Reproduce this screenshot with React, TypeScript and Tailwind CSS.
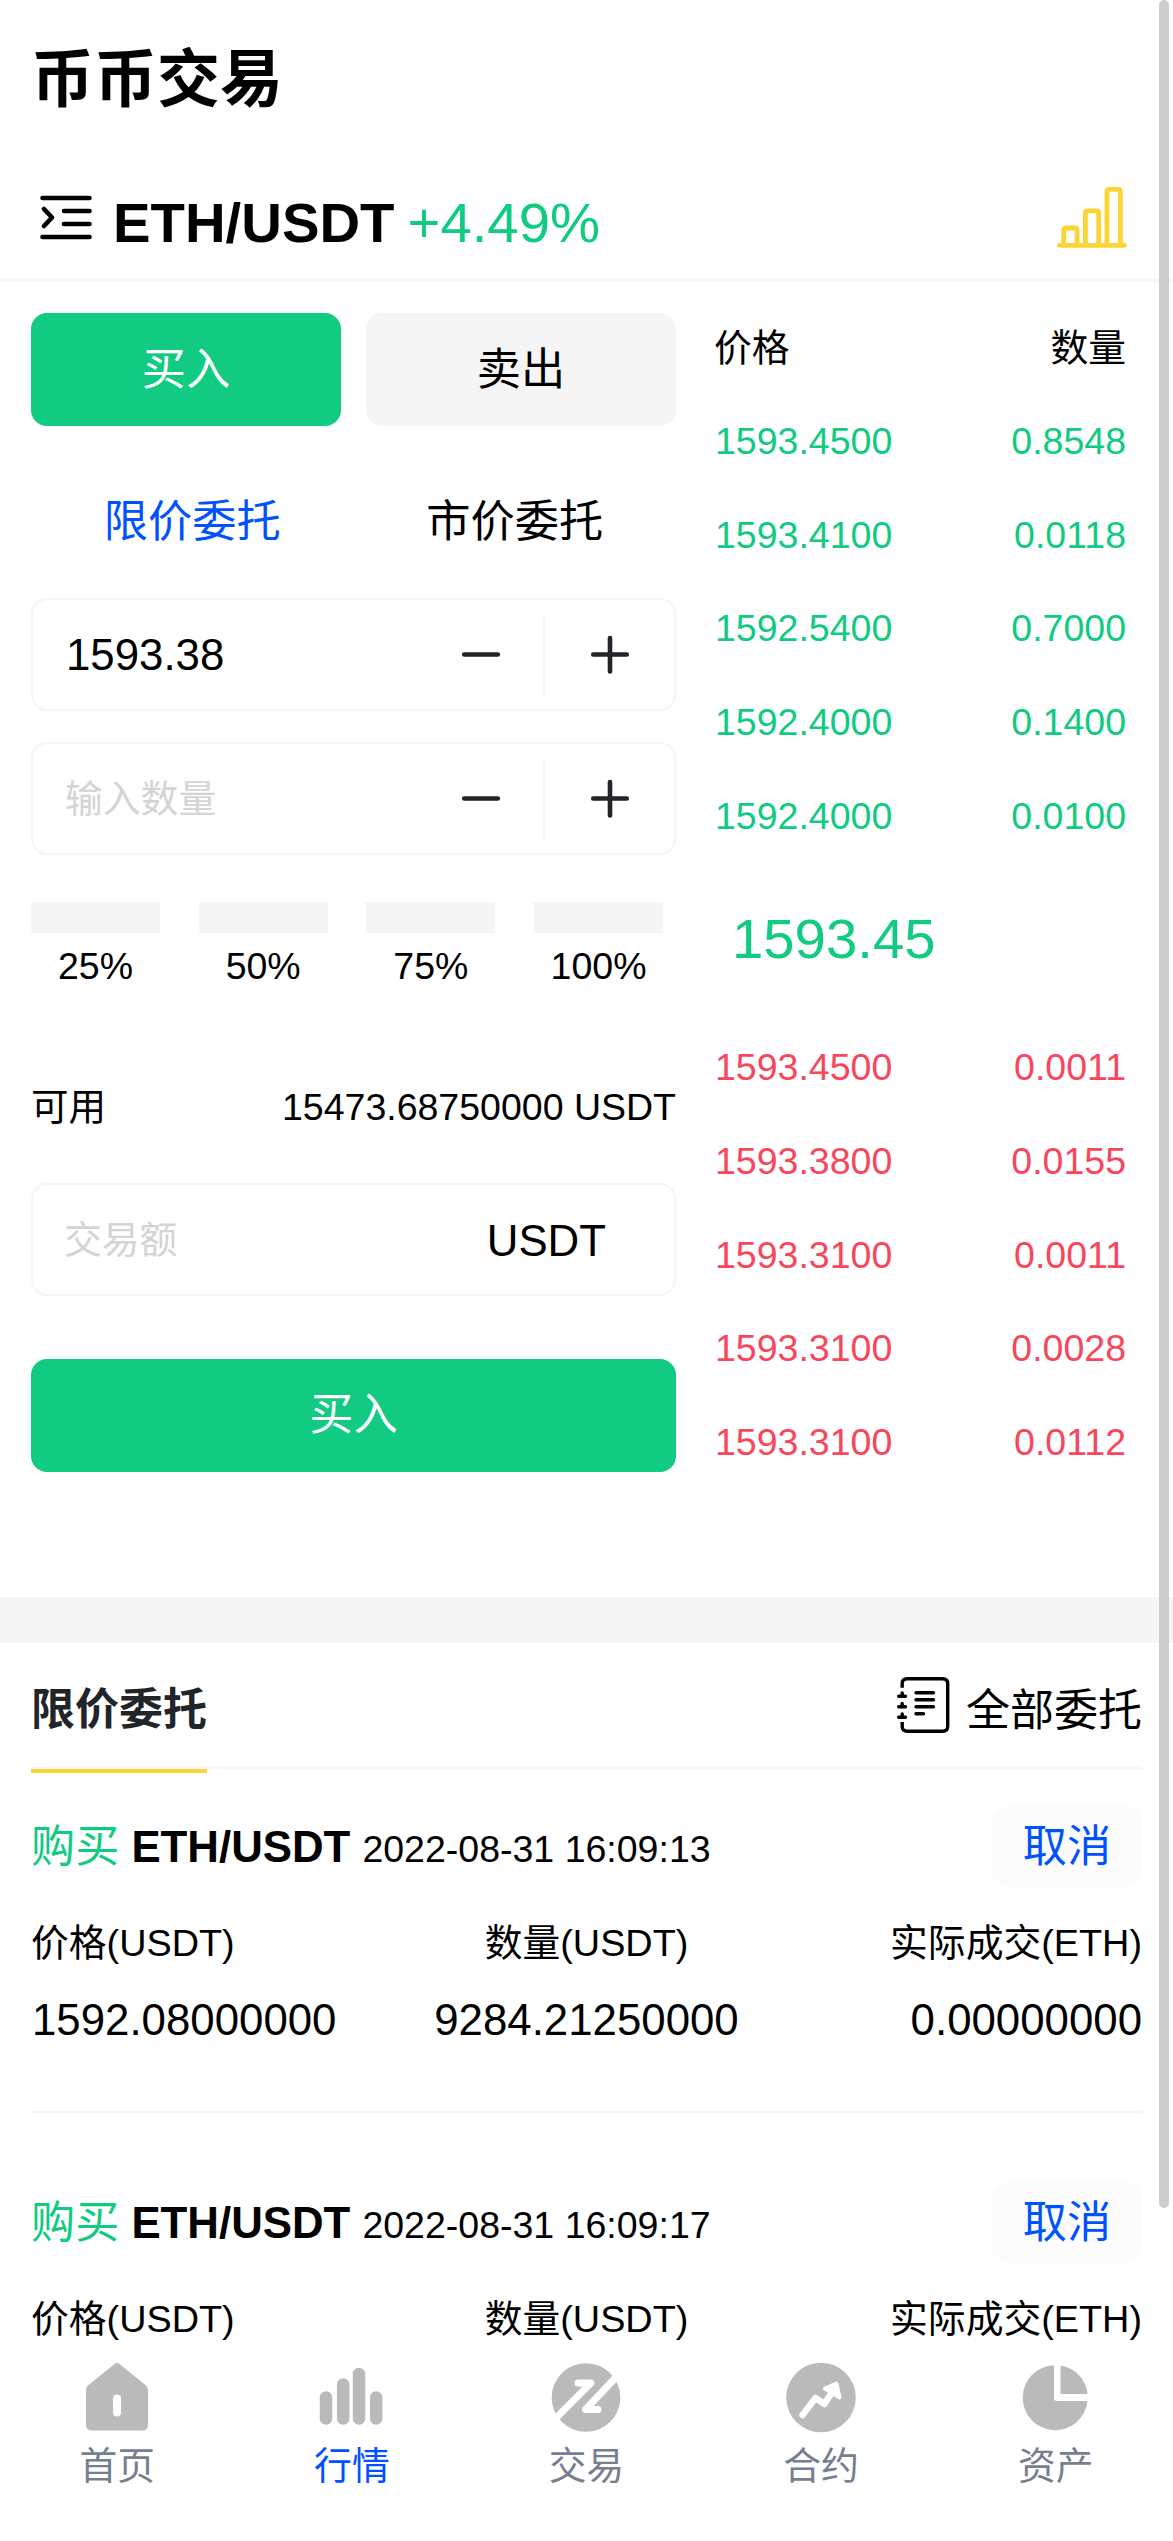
import React from "react";

const GREEN = "text-[#10cb81]";
const RED = "text-[#f8475d]";

const asks = [
  ["1593.4500", "0.8548"],
  ["1593.4100", "0.0118"],
  ["1592.5400", "0.7000"],
  ["1592.4000", "0.1400"],
  ["1592.4000", "0.0100"],
];

const bids = [
  ["1593.4500", "0.0011"],
  ["1593.3800", "0.0155"],
  ["1593.3100", "0.0011"],
  ["1593.3100", "0.0028"],
  ["1593.3100", "0.0112"],
];

function MenuIcon() {
  return (
    <svg className="h-[50px] w-[56px]" viewBox="0 0 56 50" fill="none" stroke="#000" strokeWidth="4.6" strokeLinecap="round" strokeLinejoin="round">
      <path d="M4.500 5H51.500M26 18H51.500M26 31H51.500M4.500 44H51.500" />
      <path d="M6 16L14 24.500L6 33" />
    </svg>
  );
}

function ChartIcon() {
  return (
    <svg className="h-[62px] w-[70px]" viewBox="0 0 70 62" fill="none" stroke="#fcd535" strokeWidth="4.8" strokeLinecap="round" strokeLinejoin="round">
      <path d="M2.500 58.300H67.500" />
      <path d="M6.700 58V43.500Q6.700 41 9.200 41H17.600Q20.100 41 20.100 43.500V58" />
      <path d="M28.400 58V26.300Q28.400 23.800 30.900 23.800H39.200Q41.700 23.800 41.700 26.300V58" />
      <path d="M50 58V4.800Q50 2.400 52.500 2.400H60.900Q63.400 2.400 63.400 4.800V58" />
    </svg>
  );
}

function ListIcon() {
  return (
    <svg className="mt-[-2px] h-[60px] w-[54px]" viewBox="0 0 54 60" fill="none" stroke="#000" strokeWidth="3.4" strokeLinecap="round">
      <path strokeLinecap="butt" d="M5.200 11.700V7.600Q5.200 2.700 10.200 2.700H45.700Q50.700 2.700 50.700 7.600V50.300Q50.700 55.300 45.700 55.300H10.200Q5.200 55.300 5.200 50.300V46" />
      <path d="M1.700 20.300H8.500M1.700 30.800H8.500M1.700 41.300H8.500M19 16.700H36.500M19 23.700H36.500M19 30.700H36.500M19 37.700H26.500" />
      <path d="M5.200 17V20M5.200 27.500V30.500M5.200 38V41" />
    </svg>
  );
}

function Stepper({ value, placeholder }: { value?: string; placeholder?: string }) {
  return (
    <div className="flex h-[113px] items-center rounded-[16px] border-2 border-[#f5f5f5]">
      <div className="w-[373px] pl-[32px]">
        {value ? (
          <span className="ml-px text-[43.8px]">{value}</span>
        ) : (
          <span className="block pt-[2px] text-[37.8px] text-[#d4d4d4]">{placeholder}</span>
        )}
      </div>
      <div className="flex h-[81px] w-[139px] items-center justify-center border-r-2 border-[#f5f5f5]">
        <svg className="ml-[12px] h-[40px] w-[40px]" viewBox="0 0 40 40" stroke="#212529" strokeWidth="4.600" strokeLinecap="round">
          <path d="M3.200 19.500H36.800" />
        </svg>
      </div>
      <div className="flex flex-1 items-center justify-center">
        <svg className="h-[40px] w-[40px]" viewBox="0 0 40 40" stroke="#212529" strokeWidth="4.600" strokeLinecap="round">
          <path d="M3.200 19.500H36.800M20 3V36.500" />
        </svg>
      </div>
    </div>
  );
}

function BookRows({ rows, color }: { rows: string[][]; color: string }) {
  return (
    <div className={color}>
      {rows.map(([price, amount], i) => (
        <div key={i} className="flex h-[93.84px] items-center justify-between pl-px text-[37.5px]">
          <span>{price}</span>
          <span>{amount}</span>
        </div>
      ))}
    </div>
  );
}

function Order({ time, values }: { time: string; values?: string[] }) {
  return (
    <div className="pt-[37px]">
      <div className="flex h-[81px] items-center justify-between">
        <div className="flex items-baseline gap-[12px] pt-[3px] leading-[66px]">
          <span className={"text-[44.2px] " + GREEN}>购买</span>
          <span className="text-[43.8px] font-bold">ETH/USDT</span>
          <span className="text-[37.5px]">{time}</span>
        </div>
        <div className="flex h-[81px] w-[150px] items-center justify-center rounded-[16px] bg-[#fcfcfc] pt-[2px] text-[44.2px] text-[#0052ff]">取消</div>
      </div>
      <div className="mt-[28px] grid grid-cols-3 text-[37.8px] leading-[56px]">
        <span>价格(USDT)</span>
        <span className="text-center">数量(USDT)</span>
        <span className="text-right">实际成交(ETH)</span>
      </div>
      {values && (
        <>
          <div className="mt-[16px] grid grid-cols-3 text-[43.8px] leading-[66px]">
            <span className="pl-px">{values[0]}</span>
            <span className="text-center">{values[1]}</span>
            <span className="text-right">{values[2]}</span>
          </div>
          <div className="mt-[58px] mb-[32px] h-[2px] bg-[#f5f5f5]" />
        </>
      )}
    </div>
  );
}

const navIcons = [
  <svg key="home" className="h-[74px] w-[74px]" viewBox="0 0 74 74">
    <path fill="#bababa" d="M34.500 3Q37 1 39.500 3L66 24.500Q68 26.200 68 29V63.500Q68 69.500 62 69.500H12Q6 69.500 6 63.500V29Q6 26.200 8 24.500Z" />
    <path stroke="#fff" strokeWidth="8" strokeLinecap="round" d="M37 37.500V51.500" />
  </svg>,
  <svg key="market" className="h-[74px] w-[74px]" viewBox="0 0 74 74" stroke="#bababa" strokeWidth="12.500" strokeLinecap="round">
    <path d="M11 36.500V57.500M28.200 23.500V57.500M44 13V57.500M61.200 36.500V57.500" />
  </svg>,
  <svg key="trade" className="h-[74px] w-[74px]" viewBox="0 0 74 74">
    <circle cx="37" cy="36.500" r="34.300" fill="#bababa" />
    <g fill="none" stroke="#fff" strokeWidth="7" strokeLinecap="round" strokeLinejoin="round">
      <path d="M29 22H42L6 58" />
      <path d="M49 48.500H36.500L70 13" />
    </g>
  </svg>,
  <svg key="futures" className="h-[74px] w-[74px]" viewBox="0 0 74 74">
    <circle cx="37" cy="36.500" r="34.800" fill="#bababa" />
    <g fill="none" stroke="#fff" strokeLinecap="round" strokeLinejoin="round">
      <path strokeWidth="6.500" d="M18.500 54L31.500 37L40.500 43L50 28" />
      <path fill="#fff" strokeWidth="4" d="M41 27.500L52.500 22.500L55.500 36.500Z" />
    </g>
  </svg>,
  <svg key="assets" className="h-[74px] w-[74px]" viewBox="0 0 74 74" fill="#bababa">
    <path d="M35 4.200A32.500 32.500 0 1 0 68.500 40H38Q35 40 35 37Z" />
    <path d="M41.500 4.500A32 32 0 0 1 68.500 33H41.500Z" />
  </svg>,
];
const navLabels = ["首页", "行情", "交易", "合约", "资产"];

export default function App() {
  return (
    <div className="relative flex h-[2541px] w-[1173px] flex-col overflow-hidden bg-white font-['Liberation_Sans','Noto_Sans_CJK_SC',sans-serif] text-black">
      <div className="flex h-[156px] items-center pt-[3px] pl-[31px] text-[63px] font-bold">币币交易</div>
      <header className="flex h-[126px] items-center justify-between border-b-[3px] border-[#f7f7f7] pr-[46px] pl-[38px]">
        <div className="flex items-center">
          <MenuIcon />
          <div className="ml-[19px] flex gap-[13px] pt-[11px] text-[56.3px] leading-[84px]">
            <span className="font-bold">ETH/USDT</span>
            <span className={GREEN}>+4.49%</span>
          </div>
        </div>
        <ChartIcon />
      </header>

      <main className="flex h-[1315px] pt-[31px] pl-[31px]">
        <section className="w-[645px]">
          <div className="grid grid-cols-2 gap-[25px] text-[44.2px]">
            <div className="flex h-[113px] items-center justify-center rounded-[16px] bg-[#10cb81] pt-[2px] text-white">买入</div>
            <div className="flex h-[113px] items-center justify-center rounded-[16px] bg-[#f5f5f5] pt-[2px]">卖出</div>
          </div>
          <div className="mt-[63px] mb-[43px] grid grid-cols-2 text-center text-[44.2px] leading-[66px]">
            <span className="text-[#0052ff]">限价委托</span>
            <span>市价委托</span>
          </div>
          <Stepper value="1593.38" />
          <div className="h-[31px]" />
          <Stepper placeholder="输入数量" />
          <div className="mt-[47px] flex gap-[38.700px] text-center text-[37.5px] leading-[56px]">
            {["25%", "50%", "75%", "100%"].map((p) => (
              <div key={p} className="w-[129px]">
                <div className="h-[31px] bg-[#f5f5f5]" />
                <div className="mt-[5px]">{p}</div>
              </div>
            ))}
          </div>
          <div className="mt-[85px] flex justify-between text-[37.5px] leading-[56px]">
            <span>可用</span>
            <span>15473.68750000 USDT</span>
          </div>
          <div className="mt-[48px] flex h-[113px] items-center justify-between rounded-[16px] border-2 border-[#f5f5f5] pt-[2px] pr-[68px] pl-[31px]">
            <span className="text-[37.8px] text-[#d4d4d4]">交易额</span>
            <span className="text-[43.8px]">USDT</span>
          </div>
          <div className="mt-[63px] flex h-[113px] items-center justify-center rounded-[16px] bg-[#10cb81] text-[44.2px] text-white">买入</div>
        </section>
        <section className="ml-[38px] w-[412px]">
          <div className="flex h-[81px] items-center justify-between pb-[11px] text-[37.8px] leading-[56px]">
            <span>价格</span>
            <span>数量</span>
          </div>
          <BookRows rows={asks} color={GREEN} />
          <div className={"flex h-[157px] items-center pb-[4px] pl-[18px] text-[56.3px] " + GREEN}>1593.45</div>
          <BookRows rows={bids} color={RED} />
        </section>
      </main>

      <div className="h-[46px] bg-[#f5f5f5]" />

      <section className="h-[704px] px-[31px]">
        <div className="flex h-[126px] justify-between border-b-[3px] border-[#f7f7f7] text-[44px]">
          <div className="h-[130px] border-b-4 border-[#fcd535] pt-[34px] leading-[66px] font-bold text-[#212529]">限价委托</div>
          <div className="flex pt-[35px] leading-[66px]">
            <ListIcon />
            <span className="ml-[15px]">全部委托</span>
          </div>
        </div>
        <Order time="2022-08-31 16:09:13" values={["1592.08000000", "9284.21250000", "0.00000000"]} />
        <Order time="2022-08-31 16:09:17" />
      </section>

      <nav className="grid h-[194px] grid-cols-5 bg-white pt-[14px] text-[37.8px] leading-[56px] text-[#757f90]">
        {navLabels.map((label, i) => (
          <div key={label} className="flex flex-col items-center">
            {navIcons[i]}
            <span className={i === 1 ? "mt-[3px] text-[#0052ff]" : "mt-[3px]"}>{label}</span>
          </div>
        ))}
      </nav>

      <div className="absolute top-0 right-[4px] h-[2208px] w-[10px] rounded-full bg-[#cdcdcd]" />
    </div>
  );
}
